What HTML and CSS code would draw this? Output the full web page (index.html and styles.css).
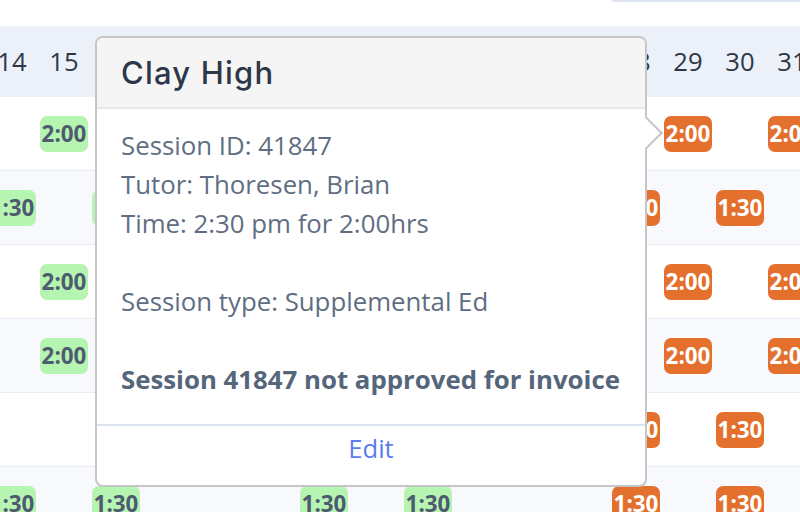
FILE: index.html
```html
<!DOCTYPE html>
<html>
<head>
	<title>Session calendar</title>
	<link rel="stylesheet" href="styles.css">
</head>
<body>
	<div class="topbar"><div class="search"></div></div>

	<div class="calendar" id="calendar">
		<div class="row head" id="days"></div>
	</div>

	<div class="popover">
		<div class="pop-head">
			<span class="pop-title">Clay High</span>
		</div>
		<div class="pop-body">
			<p>Session ID: 41847</p>
			<p>Tutor: Thoresen, Brian</p>
			<p>Time: 2:30 pm for 2:00hrs</p>
			<p></p>
			<p>Session type: Supplemental Ed</p>
			<p></p>
			<p class="strong">Session 41847 not approved for invoice</p>
		</div>
		<div class="pop-foot">
			<a href="#">Edit</a>
		</div>
	</div>

	<script>
		var days = [14, 15, 16, 17, 18, 21, 22, 23, 24, 25, 26, 27, 28, 29, 30, 31];

		// a = green 2:00, b = green 1:30, c = orange 2:00, d = orange 1:30
		var rows = [
			'.a...........c.c',
			'b.b.........c.d.',
			'.a...........c.c',
			'.a...........c.c',
			'............d.d.',
			'b.b...b.b...d.d.'
		];
		var kinds = {
			a: ['green', '2:00'],
			b: ['green', '1:30'],
			c: ['orange', '2:00'],
			d: ['orange', '1:30']
		};

		var head = document.getElementById('days');
		days.forEach(function(d) {
			var cell = document.createElement('div');
			cell.className = 'day';
			cell.textContent = d;
			head.appendChild(cell);
		});

		var cal = document.getElementById('calendar');
		rows.forEach(function(r) {
			var row = document.createElement('div');
			row.className = 'row';
			for (var i = 0; i < r.length; i++) {
				var cell = document.createElement('div');
				cell.className = 'cell';
				if (kinds[r[i]]) {
					var b = document.createElement('span');
					b.className = 'badge ' + kinds[r[i]][0];
					b.textContent = kinds[r[i]][1];
					cell.appendChild(b);
				}
				row.appendChild(cell);
			}
			cal.appendChild(row);
		});
	</script>
</body>
</html>
```

FILE: styles.css
```css
body {
	margin: 0;
	height: 512px;
	overflow: hidden;
	position: relative;
	background: #fff;
	font-family: "Open Sans", sans-serif;
}

.topbar {
	height: 26px;
	display: flex;
	justify-content: flex-end;
}
.search {
	width: 189px;
	height: 2px;
	background: #dfe6f1;
	border-bottom-left-radius: 6px;
}

.calendar {
	margin-left: -14px;
}
.row {
	display: grid;
	grid-template-columns: repeat(16, 52px);
	align-items: center;
	justify-items: center;
	height: 73px;
	border-bottom: 1px solid #e8ecf4;
}
.row:nth-child(odd) {
	background: #f7f9fd;
}
.row.head {
	height: 71px;
	border-bottom: none;
	background: #ecf0f8;
}
.day {
	font-size: 25.6px;
	color: #2d3748;
}
.badge {
	display: block;
	width: 48px;
	height: 36px;
	line-height: 36px;
	border-radius: 7px;
	text-align: center;
	font-size: 22.4px;
	font-weight: 700;
}
.green {
	background: #b5f5b1;
	color: #4f5b6e;
}
.orange {
	background: #e3702d;
	color: #fff;
}

.popover {
	position: absolute;
	left: 95px;
	top: 36px;
	width: 548px;
	border: 2px solid #c6c6c6;
	border-radius: 8px;
	background: #fff;
}
.popover::after {
	content: '';
	position: absolute;
	box-sizing: border-box;
	width: 24px;
	height: 24px;
	right: -13px;
	top: 83px;
	background: #fff;
	border-top: 2px solid #c6c6c6;
	border-right: 2px solid #c6c6c6;
	transform: rotate(45deg);
}
.pop-head {
	height: 69px;
	padding: 0 24px;
	display: flex;
	align-items: center;
	background: #f5f5f5;
	border-bottom: 2px solid #e7e7e7;
	border-radius: 6px 6px 0 0;
}
.pop-title {
	font-family: Inter, sans-serif;
	font-size: 31px;
	font-weight: 500;
	letter-spacing: 1.2px;
	color: #2d3748;
}
.pop-body {
	padding: 17px 16px 25px 24px;
	font-size: 25.8px;
	line-height: 39px;
	white-space: nowrap;
	color: #5f6e83;
}
.pop-body p {
	margin: 0;
	min-height: 39px;
}
.pop-body .strong {
	font-weight: 700;
	color: #56667a;
}
.pop-foot {
	padding: 5px 0 15px;
	line-height: 36px;
	text-align: center;
	border-top: 2px solid #dce3ed;
}
.pop-foot a {
	font-size: 25.6px;
	color: #5a7cf0;
	text-decoration: none;
}
```
